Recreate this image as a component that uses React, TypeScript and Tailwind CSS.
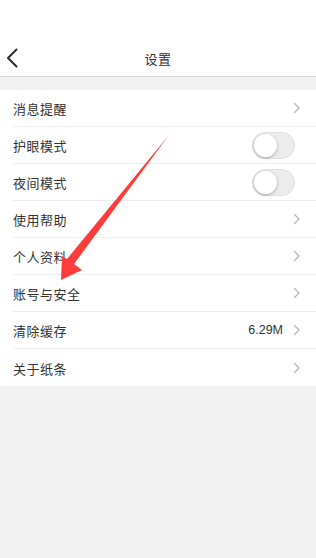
import React from 'react';

type Row = {
  label: string;
  kind: 'link' | 'toggle';
  value?: string;
};

const rows: Row[] = [
  { label: '消息提醒', kind: 'link' },
  { label: '护眼模式', kind: 'toggle' },
  { label: '夜间模式', kind: 'toggle' },
  { label: '使用帮助', kind: 'link' },
  { label: '个人资料', kind: 'link' },
  { label: '账号与安全', kind: 'link' },
  { label: '清除缓存', kind: 'link', value: '6.29M' },
  { label: '关于纸条', kind: 'link' },
];

const Chevron: React.FC = () => (
  <svg width="8" height="12" viewBox="0 0 8 12" fill="none">
    <path d="M1.5 1.5L6 6l-4.5 4.5" stroke="#b8b8b8" strokeWidth={1.4} strokeLinecap="round" strokeLinejoin="round" />
  </svg>
);

const Toggle: React.FC = () => (
  <div className="mr-[6px] h-[27px] w-[43px] rounded-full border border-[#dedede] bg-[#ececec] p-[1px]">
    <div className="h-[23px] w-[23px] rounded-full bg-white shadow-[0_1px_3px_rgba(0,0,0,0.3)]" />
  </div>
);

const App: React.FC = () => {
  return (
    <div
      className="relative min-h-[558px] w-[316px] bg-[#f2f2f2] text-[#333]"
      style={{ fontFamily: '"Noto Sans CJK SC", "Noto Sans", sans-serif' }}
    >
      {/* header */}
      <header className="h-[77px] border-b border-[#d9d9d9] bg-white pt-[40px]">
        <div className="relative flex h-[36px] items-center justify-center">
          <button className="absolute left-[6px] top-[8px]">
            <svg width="13" height="20" viewBox="0 0 13 20" fill="none">
              <path d="M10.5 1.5L2 10l8.5 8.5" stroke="#2b2b2b" strokeWidth={2} strokeLinecap="round" strokeLinejoin="round" />
            </svg>
          </button>
          <h1 className="text-[13px] leading-none tracking-[0.5px]">设置</h1>
        </div>
      </header>

      <div className="h-[13px]" />

      {/* settings list */}
      <ul className="bg-white">
        {rows.map((row, i) => (
          <li key={row.label} className="h-[37px] pl-[13px]">
            <div
              className={
                'flex h-full items-center justify-between pr-[15px] ' +
                (i < rows.length - 1 ? 'border-b border-[#ededed]' : '')
              }
            >
              <span className="pt-[1px] text-[13px] leading-none tracking-[0.5px]">{row.label}</span>
              {row.kind === 'toggle' ? (
                <Toggle />
              ) : (
                <div className="flex items-center gap-[10px]">
                  {row.value && (
                    <span className="text-[12.5px] leading-none" style={{ fontFamily: '"Liberation Sans", sans-serif' }}>
                      {row.value}
                    </span>
                  )}
                  <Chevron />
                </div>
              )}
            </div>
          </li>
        ))}
      </ul>

      {/* red annotation arrow */}
      <svg className="pointer-events-none absolute left-0 top-0" width="316" height="558" viewBox="0 0 316 558">
        <polygon points="169,135 74,264 82,270 61,280 62,256 67,259" fill="#ff3b3b" />
      </svg>
    </div>
  );
};

export default App;
